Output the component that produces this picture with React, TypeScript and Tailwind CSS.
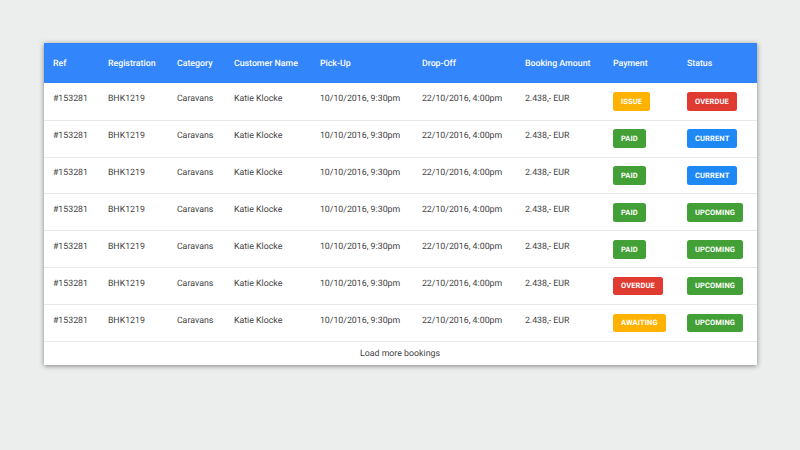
const columns = ["Ref", "Registration", "Category", "Customer Name", "Pick-Up", "Drop-Off", "Booking Amount", "Payment", "Status"];

const gridCols = "grid grid-cols-[55px_69px_57px_86px_102px_103px_88px_74px_79px]";

const badgeColors: Record<string, string> = {
  ISSUE: "bg-[#ffb300]",
  AWAITING: "bg-[#ffb300]",
  PAID: "bg-[#43a036]",
  UPCOMING: "bg-[#43a036]",
  OVERDUE: "bg-[#e03b30]",
  CURRENT: "bg-[#1e88f5]",
};

const rows = [
  ["ISSUE", "OVERDUE"],
  ["PAID", "CURRENT"],
  ["PAID", "CURRENT"],
  ["PAID", "UPCOMING"],
  ["PAID", "UPCOMING"],
  ["OVERDUE", "UPCOMING"],
  ["AWAITING", "UPCOMING"],
];

const Badge = ({ label }: { label: string }) => (
  <div className="pl-[9.4px]">
    <span className={`inline-flex h-[18.7px] items-center rounded-[2.5px] px-2 text-[7.5px] font-bold tracking-[0.15px] text-white ${badgeColors[label]}`}>
      {label}
    </span>
  </div>
);

const Cell = ({ text }: { text: string }) => <div className="pl-[9.4px] leading-[15px]">{text}</div>;

export default function App() {
  return (
    <div className="flex h-[450px] w-[800px] flex-col items-center bg-[#eceeee] pt-[43px] font-['Roboto',sans-serif] text-[8.8px] text-[#444] [text-rendering:geometricPrecision]">
      <div className="w-[713px] bg-white shadow-[0_1px_5px_rgba(0,0,0,0.45)]">
        <div className={`${gridCols} h-[39.5px] items-center bg-[#3285fb] pt-[3px] font-medium text-white`}>
          {columns.map((c) => (
            <div key={c} className="pl-[9.4px]">{c}</div>
          ))}
        </div>
        {rows.map(([payment, status], i) => (
          <div key={i} className={`${gridCols} items-start border-b border-[#e8e8e8] ${i === 0 ? "h-[38.3px] pt-[9.9px]" : "h-[36.85px] pt-[8.5px]"}`}>
            <Cell text="#153281" />
            <Cell text="BHK1219" />
            <Cell text="Caravans" />
            <Cell text="Katie Klocke" />
            <Cell text="10/10/2016, 9:30pm" />
            <Cell text="22/10/2016, 4:00pm" />
            <Cell text="2.438,- EUR" />
            <Badge label={payment} />
            <Badge label={status} />
          </div>
        ))}
        <div className="flex h-[23px] items-center justify-center pt-[2px]">Load more bookings</div>
      </div>
    </div>
  );
}
